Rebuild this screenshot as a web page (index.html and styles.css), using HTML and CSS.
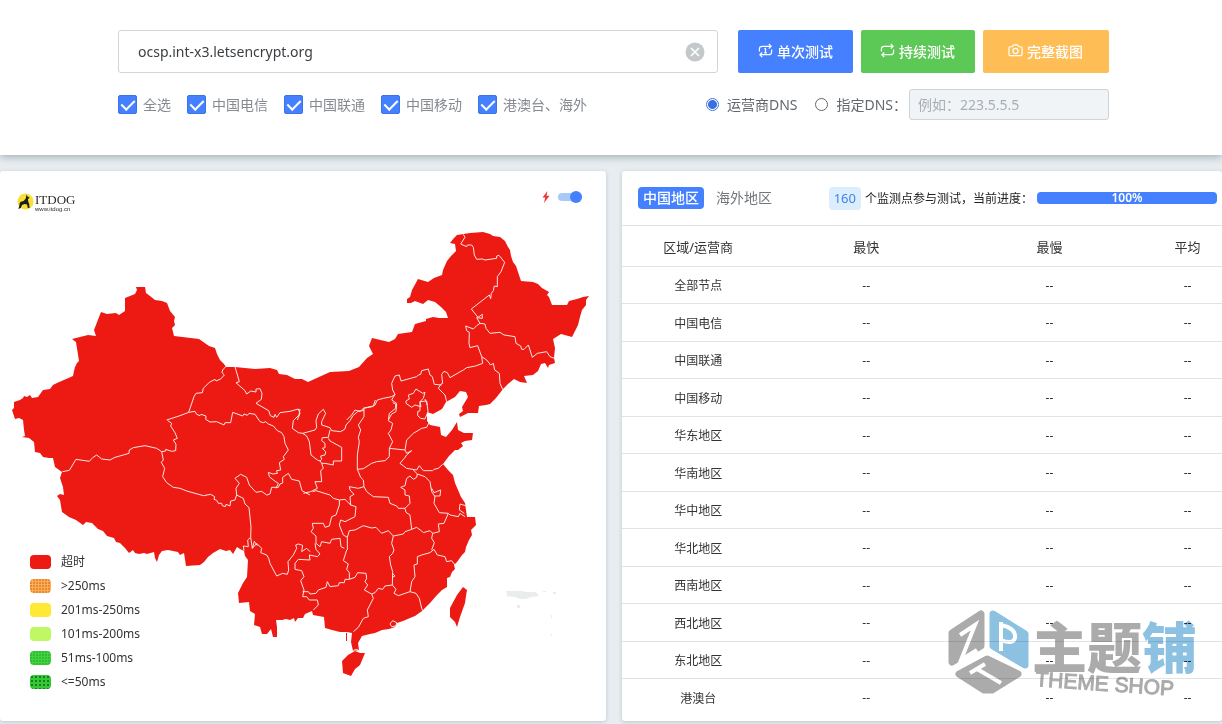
FILE: index.html
```html
<!DOCTYPE html>
<html lang="zh-CN">
<head>
<meta charset="utf-8">
<title>ITDOG</title>
<link rel="stylesheet" href="styles.css">
</head>
<body>
<header class="panel">
  <div class="search-row">
    <div class="search">
      <input class="search-input" type="text" value="ocsp.int-x3.letsencrypt.org" aria-label="域名">
      <button class="clear" type="button" aria-label="清除"><svg viewBox="0 0 20 20" width="20" height="20"><circle cx="10" cy="10" r="9.500" fill="#c3c9ca"/><path d="M6 6l8 8M14 6l-8 8" stroke="#fff" stroke-width="1.6"/></svg></button>
    </div>
    <div class="actions">
      <button class="btn btn-blue" type="button"><svg class="btn-icon" viewBox="0 0 16 16"><path d="M1.500 9V6.500q0-3 3-3H14M11.500 1l2.500 2.500-2.500 2.500M14.500 7v2.500q0 3-3 3H2M4.500 10L2 12.500 4.500 15M6.800 6.500L8 5.800V10.500M6.500 10.500h3"/></svg>单次测试</button>
      <button class="btn btn-green" type="button"><svg class="btn-icon" viewBox="0 0 16 16"><path d="M1.500 9V6.500q0-3 3-3H14M11.500 1l2.500 2.500-2.500 2.500M14.500 7v2.500q0 3-3 3H2M4.500 10L2 12.500 4.500 15"/></svg>持续测试</button>
      <button class="btn btn-orange" type="button"><svg class="btn-icon" viewBox="0 0 16 16"><path d="M2.500 4H4.500l1.500-2h4l1.500 2h2q1.500 0 1.500 1.500v6.500q0 1.500-1.500 1.500h-11Q1 13.500 1 12V5.500Q1 4 2.500 4z"/><circle cx="8" cy="8.500" r="2.700"/></svg>完整截图</button>
    </div>
  </div>
  <div class="options-row">
    <div class="checks">
      <label class="check"><input type="checkbox" checked>全选</label>
      <label class="check"><input type="checkbox" checked>中国电信</label>
      <label class="check"><input type="checkbox" checked>中国联通</label>
      <label class="check"><input type="checkbox" checked>中国移动</label>
      <label class="check"><input type="checkbox" checked>港澳台、海外</label>
    </div>
    <div class="dns">
      <label class="radio"><input type="radio" name="dns" checked>运营商DNS</label>
      <label class="radio"><input type="radio" name="dns">指定DNS：</label>
      <input class="dns-input" type="text" placeholder="例如：223.5.5.5" aria-label="指定DNS">
    </div>
  </div>
</header>

<main class="board">
  <section class="card map-card">
    <div class="map-bar">
      <div class="logo">
        <svg width="18" height="18" viewBox="0 0 18 18"><circle cx="9.500" cy="8.500" r="8" fill="#f8e034"/><path d="M10.500 1.500l.8 1.700 2.200 1.300-.6 1-1 .3.300 2.700 1 2.500.3 4h-1.700l-.7-3.500-2.600-.4-2.500.8-1.200 3.200-2.500 1 1-3 .3-2.500.8-1.700 3.200-.8 2.200-2.500z" fill="#1d1d1b"/></svg>
        <div class="logo-text"><span class="logo-name">ITDOG</span><span class="logo-url">www.itdog.cn</span></div>
      </div>
      <label class="turbo" aria-label="极速模式">
        <svg width="8" height="12" viewBox="0 0 8 12"><path d="M5.500 0L.5 6.500h2.700L2 12l5.500-7.200H4.600z" fill="#e93b3b"/></svg>
        <input type="checkbox" checked>
      </label>
    </div>
    <svg class="map" viewBox="0 221 606 470" role="img" aria-label="中国地图">
      <g fill="#ec1a13">
        <path d="M12 410L14 408 14 402 20 400 23 398 24 396 27 397 30 395 32 398 38 397 43 390 50 389 53 385 57 383 73 376 74 371 75 367 77 363 79 361 76 342 72 339 88 335 96 336 94 330 101 312 107 314 116 313 119 315 125 311 125 298 135 294 137 290 136 287 145 287 146 293 150 296 155 300 162 301 167 303 170 311 175 317 174 321 175 325 172 328 174 336 199 339 209 346 215 348 217 354 220 360 224 364 226 367 235 367 255 369 270 368 277 370 279 374 287 375 295 379 302 379 308 382 330 372 349 371 359 367 367 358 373 354 369 346 372 338 389 342 395 339 398 334 412 332 415 324 426 321 426 319 433 317 439 318 448 318 446 312 441 307 435 302 428 300 423 304 415 301 411 303 407 303 407 299 410 297 412 290 418 279 428 282 434 278 442 275 443 270 447 261 451 256 456 251 455 244 450 243 454 238 457 235 470 233 483 232 490 234 493 236 500 237 505 241 508 247 510 250 511 256 513 262 516 266 518 272 521 281 533 282 538 284 542 288 549 292 547 295 549 297 552 305 567 305 569 301 577 299 583 297 589 296 586 300 586 305 582 310 580 317 578 325 572 337 561 334 553 339 555 348 554 358 555 363 549 365 548 368 545 363 541 364 538 371 533 375 524 376 527 383 520 382 514 379 508 384 503 389 496 398 490 404 486 405 479 406 478 413 468 413 460 417 459 414 463 411 462 407 468 397 466 392 460 391 455 397 446 402 442 409 433 414 427 412 427 421 430 425 440 427 441 435 446 437 452 430 457 422 458 430 464 433 473 433 472 440 465 441 461 443 463 446 458 450 455 450 449 456 443 464 448 470 453 475 455 483 458 490 461 497 465 503 467 517 475 517 476 525 471 530 472 535 469 540 466 547 465 552 462 555 457 562 454 565 455 569 452 572 450 577 447 578 447 587 442 590 437 595 430 603 422 611 415 616 410 618 403 621 397 623 395 627 389 629 382 630 375 633 370 634 362 636 358 643 359 650 353 651 351 642 352 633 347 632 340 632 332 630 325 628 324 617 313 615 312 611 305 614 303 618 298 618 295 622 294 618 290 620 286 619 282 620 276 620 277 627 277 637 273 637 271 629 267 634 262 634 260 627 254 625 255 614 250 611 249 602 239 603 238 593 243 583 247 577 248 560 245 556 244 551 240 549 237 547 233 554 230 550 226 551 220 549 213 553 208 557 204 562 200 565 186 566 184 553 180 555 178 552 173 551 168 550 162 551 159 555 157 562 155 558 154 552 147 554 144 553 139 554 135 553 133 550 129 553 125 548 120 543 116 542 114 538 107 536 103 531 98 529 92 523 86 522 83 525 76 520 69 517 62 512 60 500 57 496 60 494 64 495 63 487 60 478 62 472 55 467 53 458 49 458 43 457 40 453 35 452 34 442 29 438 22 437 25 436 24 430 23 420 19 418 15 419z"/>
        <path d="M346 633h1v8h-1z"/>
        <path d="M342 661L348 655 355 651 360 653 365 653 360 665 355 669 351 676 343 673z"/>
        <path d="M463 587L467 590 466 596 465 603 460 617 457 627 455 622 450 617 450 608 457 595z"/>
      </g>
      <g class="borders">
        <g transform="translate(0 220) scale(.33333)">
          <path d="M677 440L668 450 666 458 673 465 662 477 648 483 645 478 628 487 610 505 607 518 588 520 582 530 566 577 540 587 500 600"/>
          <path d="M705 440L718 485 708 488 735 512 740 522 752 513 768 516 768 507 780 506 786 520 784 538 768 550 806 572 811 587 822 592 825 583 830 592 840 578 870 574 895 567 900 580 892 600"/>
        </g>
        <g transform="translate(0 400) scale(.33333)">
          <path d="M503 62L515 70 512 78 525 98 532 115 520 120 528 133 527 152 515 154 497 148 497 153 485 155 470 145 435 137 400 143 388 150 387 160 370 165 345 172 330 180 305 177 290 165 278 173 268 184 228 178 208 211 187 215"/>
          <path d="M566 37L585 34 590 43 600 47 603 43 618 48 617 58 630 66 650 65 672 75 675 68 692 68 698 37 728 48 732 42 742 46 747 40 765 43 780 65 790 68 797 65 805 72 820 78 832 92 845 98 852 110 855 130 865 150 850 170 853 178 838 188 842 210 830 212 832 220 818 222 805 217 808 230 820 240 835 250 828 265"/>
          <path d="M485 155L490 180 484 187 494 205 488 230 500 248 520 262 540 265 560 273 610 287 632 283 644 290 642 298 650 301 655 310 665 310 667 317 676 320 678 313 690 318 692 303 705 300 710 285 708 265 718 250 705 235 722 223 740 232 748 255 768 277 785 274 800 285 810 282 815 262 835 262 840 252 848 249 848 232 865 220 875 238 898 243 906 272 930 285"/>
          <path d="M710 285L730 295 735 312 747 323 753 380 752 412 757 445 770 430 785 445 782 458 800 465 806 475 810 490 830 528 848 520 862 523 866 510 864 485 880 465 890 445 887 435 895 432 908 436 905 455 920 445 930 455M752 412L743 420 745 440 730 438 732 452M757 445L763 424 772 437"/>
        </g>
        <g transform="translate(300 220) scale(.33333)">
          <path d="M490 43L495 52 482 72 500 80 502 75 515 75 520 82 523 105 530 118 547 117 555 120 590 115 590 108 597 106 614 127 603 155 592 170 592 200 583 198 580 212 574 220 572 236 568 225 514 267 534 292 547 283 547 295 530 293 540 310 555 312 558 325 570 340 600 337 612 345 645 350 648 370 662 378 665 388 672 388 685 375 697 412 712 400 740 395 750 410 763 415"/>
          <path d="M540 310L530 317 520 327 497 318 500 332 508 337 507 370 510 383 533 377 545 410 548 430 527 438 500 443 490 450 450 473 442 458 432 454 425 463 428 490 423 492 415 505 435 525 440 545M545 410L560 420 572 435 580 430 584 450 598 460 600 490 608 508"/>
          <path d="M425 495L403 493 397 470 390 465 385 447 365 452 362 463 355 465 350 470 303 483 298 465 285 468 275 490 278 510 285 523 275 530 250 535 232 540 225 555 217 560 190 565 180 575 165 570 155 585 140 600"/>
          <path d="M285 523L275 540 290 550 288 575 275 582 265 600M348 507L368 520 375 517 370 535 360 545 363 560 345 555 335 562 318 550 318 543 328 537 325 525 340 520zM360 545L380 543 384 575 375 597 362 595 353 587 353 575 360 572zM375 537L382 555"/>
        </g>
        <g transform="translate(230 400) scale(.33333)">
          <path d="M190 62L187 85 205 98 218 100 255 90 260 82 258 62 265 42 280 28 287 40 275 65 275 75 300 83 305 92 332 95 345 87 348 75 360 62 368 48 385 33 400 32 402 24 430 18 436 0M190 62L207 45 210 27"/>
          <path d="M218 100L230 108 238 125 243 165 262 180 270 183 275 178 272 168 285 165 287 155 277 145 285 143 285 130 275 122 277 113 295 112 300 90M295 115L300 123 335 142 335 183 310 183 310 195 285 190 275 190 270 183M275 190L280 205 272 212 275 245 255 245 262 265 242 275 220 280"/>
          <path d="M402 28L402 50 385 75 392 90 385 112 388 125 382 165 382 208 392 232 400 240 402 260 385 265 358 260 360 270 372 283 360 290 362 315"/>
          <path d="M382 208L400 206 425 190 440 185 465 182 478 170 478 145 488 125 475 100 483 90 488 70 475 62 478 40 497 25 497 12 488 8"/>
          <path d="M248 275L258 272 300 285 310 295 328 300 345 298 362 315 378 320 375 350 345 365 332 360 328 375 340 405 352 412 352 450M328 300L328 315 318 345 305 350 298 378 285 382 280 370 270 370 247 370 250 385 243 395 258 408 258 430 270 440 275 425 300 430 305 418 330 415 333 440 343 445"/>
          <path d="M402 260L410 275 430 290 475 292 480 310 500 318 505 325 525 325 528 337 540 345 545 388 525 395 520 402 490 408 475 392 455 400 438 382 425 384 400 377 375 390 358 392 352 412M545 388L560 382 575 393 580 398 600 392 608 400 605 415 613 428 605 450M490 408L485 430 492 450"/>
          <path d="M525 325L540 310 538 288 525 285 525 270 512 262 525 257 530 235 540 228 550 238 560 232 562 222 585 230 600 245 605 275 615 290 612 310 628 338 655 340 642 370 625 372 628 395 608 400M605 265L612 278 632 270 630 288 612 288"/>
          <path d="M562 222L548 208 530 205 510 190 523 175 530 165 545 152 530 160 525 150 478 145M525 150L530 120 550 100 575 85 590 82 597 68M548 208L560 210 568 197 580 212 608 212 612 208 625 205 638 193M655 340L660 345 685 350 690 340 705 350M710 318L690 312 688 330 703 340"/>
        </g>
        <g transform="translate(230 540) scale(.33333)">
          <path d="M350 30L340 62 355 72 350 88 358 98 358 118 375 112 383 98 408 100 410 115 405 125 413 135 403 150 425 162M358 118L345 118 343 128 328 128 325 137 300 140 292 125 288 142 265 150 258 160 240 162 235 155 218 155"/>
          <path d="M255 10L258 28 270 42 262 50 238 45 240 60 205 58 195 70 195 88 215 92 222 110 212 122 222 150 218 170 230 170 238 180 262 180 265 195 250 210"/>
          <path d="M492 30L488 40 478 50 482 75 488 95 487 135 465 138 458 148 445 145 435 158 425 162 430 175 412 210 415 230 400 235 385 262 370 275M487 100L495 108 487 112M487 135L498 148 492 160 505 167 540 155 558 160 568 175 575 205 578 212"/>
          <path d="M540 155L545 125 555 110 552 75 562 72 562 50 575 45 600 38 612 28 622 45 645 50 650 65 665 62 675 75M483 248L488 242 500 248 498 258 485 260 480 252zM370 331L380 328 390 333"/>
        </g>
      </g>
      <g fill="#e9edeb"><path d="M506 591h17l3 1h10l3 4-8 1-5 2-6 0-5-2-8-1z"/><path d="M543 591h3v1h-3zM553 592h3v2h-3zM517 605h3v3h-3zM551 615h1v3h-1zM551 634h1v2h-1z"/></g>
    </svg>
    <ul class="legend">
      <li><i class="swatch s-timeout"></i>超时</li>
      <li><i class="swatch s-250"></i>&gt;250ms</li>
      <li><i class="swatch s-201"></i>201ms-250ms</li>
      <li><i class="swatch s-101"></i>101ms-200ms</li>
      <li><i class="swatch s-51"></i>51ms-100ms</li>
      <li><i class="swatch s-50"></i>&lt;=50ms</li>
    </ul>
  </section>

  <section class="card result-card">
    <div class="result-bar">
      <div class="tabs">
        <button class="tab tab-active" type="button">中国地区</button>
        <button class="tab" type="button">海外地区</button>
      </div>
      <div class="status">
        <span class="count">160</span>
        <span class="status-text">个监测点参与测试，当前进度：</span>
        <div class="progress">100%</div>
      </div>
    </div>
    <table class="results">
      <colgroup><col class="c-area"><col class="c-fast"><col class="c-slow"><col></colgroup>
      <thead><tr><th>区域/运营商</th><th>最快</th><th>最慢</th><th>平均</th></tr></thead>
      <tbody>
        <tr><td>全部节点</td><td>--</td><td>--</td><td>--</td></tr>
        <tr><td>中国电信</td><td>--</td><td>--</td><td>--</td></tr>
        <tr><td>中国联通</td><td>--</td><td>--</td><td>--</td></tr>
        <tr><td>中国移动</td><td>--</td><td>--</td><td>--</td></tr>
        <tr><td>华东地区</td><td>--</td><td>--</td><td>--</td></tr>
        <tr><td>华南地区</td><td>--</td><td>--</td><td>--</td></tr>
        <tr><td>华中地区</td><td>--</td><td>--</td><td>--</td></tr>
        <tr><td>华北地区</td><td>--</td><td>--</td><td>--</td></tr>
        <tr><td>西南地区</td><td>--</td><td>--</td><td>--</td></tr>
        <tr><td>西北地区</td><td>--</td><td>--</td><td>--</td></tr>
        <tr><td>东北地区</td><td>--</td><td>--</td><td>--</td></tr>
        <tr><td>港澳台</td><td>--</td><td>--</td><td>--</td></tr>
      </tbody>
    </table>
    <svg class="watermark" width="260" height="100" viewBox="0 0 260 100" aria-hidden="true">
      <g stroke-linejoin="round" stroke-width="7">
        <path d="M8 31L37 12V44L8 60z" fill="#ababab" stroke="#ababab"/>
        <path d="M49 12L81 32V63L49 44z" fill="#8cc1e1" stroke="#8cc1e1"/>
        <path d="M15 72L43 57 74 72 48 88 40 88z" fill="#ababab" stroke="#ababab"/>
      </g>
      <g fill="none" stroke="#fff" stroke-width="4">
        <path d="M16 33L31 23 17 58 33 48"/>
        <path d="M57 20V49M57 23Q72 26 71 36 69 43 57 38"/>
        <path d="M26 71L41 62M33 67L57 81"/>
      </g>
      <text class="wm-cn" x="88" y="66"><tspan fill="#ababab">主题</tspan><tspan fill="#8cc1e1">铺</tspan></text>
      <text class="wm-en" x="91" y="84" transform="rotate(4 91 84)">THEME SHOP</text>
    </svg>
  </section>
</main>
</body>
</html>
```
FILE: styles.css
```css
* { box-sizing: border-box; }
body {
  margin: 0;
  background: #e8edf1;
  color: #333;
  font-family: "Noto Sans", "Noto Sans CJK SC", sans-serif;
  font-size: 14px;
}
button, input { font: inherit; }
button { border: 0; padding: 0; cursor: pointer; }

.panel {
  padding: 30px 113px 35px 118px;
  background: #fff;
  box-shadow: 0 2px 8px rgba(60, 80, 95, .4);
}
.search-row { display: flex; gap: 20px; }
.search { position: relative; flex: 1; }
.search-input {
  width: 100%;
  height: 43px;
  padding: 0 44px 0 19px;
  border: 1px solid #d2d4d7;
  border-radius: 3px;
  background: #fff;
  color: #3c4043;
}
.clear {
  position: absolute;
  top: 12px;
  right: 13px;
  height: 20px;
  background: none;
}
.clear svg { display: block; }
.actions { display: flex; gap: 8px; }
.btn {
  display: flex;
  align-items: center;
  justify-content: center;
  gap: 4px;
  height: 43px;
  padding: 0 20px 2px;
  border-radius: 2px;
  color: #fff;
  font-weight: 500;
}
.btn-icon { width: 15px; height: 15px; fill: none; stroke: #fff; stroke-width: 1.3; }
.btn-blue { background: #4580ff; }
.btn-green { padding-left: 19px; background: #5cc855; }
.btn-orange { padding: 0 26px 2px 25px; background: #ffbe55; }

.options-row { display: flex; justify-content: space-between; margin-top: 16px; }
.checks, .dns { display: flex; align-items: center; }
.checks { gap: 16px; color: #868b92; }
.check, .radio { display: flex; align-items: center; line-height: 20px; }
.check { gap: 6px; }
.check input {
  appearance: none;
  width: 19px;
  height: 19px;
  margin: 0;
  border: 1px solid #3a72e8;
  border-radius: 2px;
  background: #4580ff;
}
.check input::before {
  content: "";
  display: block;
  width: 6px;
  height: 11px;
  margin: 1px 0 0 5px;
  border: solid #fff;
  border-width: 0 2px 2px 0;
  transform: rotate(45deg);
}
.radio { gap: 8px; color: #63686e; }
.radio + .radio { margin-left: 18px; }
.radio input {
  appearance: none;
  width: 13px;
  height: 13px;
  margin: 0;
  border: 1px solid #666;
  border-radius: 50%;
  background: #fff;
}
.radio input:checked {
  border-color: #3b78e0;
  background: radial-gradient(circle, #3b6fe0 4px, #fff 5px);
}
.dns-input {
  width: 200px;
  height: 31px;
  margin-left: 2px;
  padding: 0 8px;
  border: 1px solid #cdd3d8;
  border-radius: 3px;
  background: #f0f4f7;
}
.dns-input::placeholder { color: #a9aeb3; opacity: 1; }

.board {
  display: grid;
  grid-template-columns: 606fr 600fr;
  gap: 16px;
  margin-top: 16px;
  padding-bottom: 3px;
}
.card {
  position: relative;
  min-width: 0;
  border-radius: 3px;
  background: #fff;
  box-shadow: 0 1px 4px rgba(90, 105, 120, .3);
}
.map-card { padding-bottom: 30px; }
.map-bar {
  display: flex;
  justify-content: space-between;
  height: 50px;
  padding: 20px 24px 0 16px;
}
.logo { display: flex; align-items: flex-start; gap: 1px; }
.logo svg { margin-top: 2px; }
.logo-text { display: flex; flex-direction: column; color: #2b2b2b; }
.logo-name { font: 13px/14px "Liberation Serif", serif; margin-top: 2px; }
.logo-url { font: 6px/5px "Liberation Sans", sans-serif; }
.turbo { display: flex; align-items: center; gap: 8px; height: 12px; }
.turbo input {
  appearance: none;
  display: flex;
  align-items: center;
  justify-content: flex-end;
  width: 24px;
  height: 8px;
  margin: 0;
  border-radius: 4px;
  background: #a9caf8;
}
.turbo input::before {
  content: "";
  width: 12px;
  height: 12px;
  border-radius: 50%;
  background: #4580ff;
}
.map { display: block; width: 100%; height: auto; }
.borders path { fill: none; stroke: #ffe6e3; stroke-width: 3; stroke-linejoin: round; }
.legend {
  position: absolute;
  left: 30px;
  bottom: 27px;
  margin: 0;
  padding: 0;
  list-style: none;
  font-size: 12px;
  line-height: 24px;
}
.legend li { display: flex; align-items: center; gap: 10px; }
.swatch { width: 21px; height: 14px; border-radius: 4px; }
.s-timeout { background: #ec1a13; }
.s-250 { background: radial-gradient(circle at 1px 1px, #e8853a 1px, transparent 1px) 0 0 / 3px 3px #ffb04e; }
.s-201 { background: #ffe935; }
.s-101 { background: #bff862; }
.s-51 { background: radial-gradient(circle at 1px 1px, #32bb36 1px, transparent 1px) 0 0 / 3px 3px #3fd33c; }
.s-50 { background: radial-gradient(circle at 2px 2px, #1b7a22 1px, transparent 1px) 0 0 / 4px 4px #35c935; }

.result-card { padding-bottom: 4px; }
.result-bar {
  display: flex;
  align-items: center;
  justify-content: space-between;
  height: 54px;
  padding: 0 5px 0 16px;
}
.tabs { display: flex; gap: 7px; }
.tab {
  height: 22px;
  padding: 0 5px;
  border-radius: 4px;
  background: none;
  color: #73777c;
  line-height: 22px;
}
.tab-active { background: #4580ff; color: #fff; font-weight: 500; }
.status { display: flex; align-items: center; gap: 4px; font-size: 12px; color: #222; }
.count {
  padding: 0 5px;
  border-radius: 4px;
  background: #dcedfd;
  color: #3f84e8;
  font-size: 13px;
  line-height: 23px;
}
.progress {
  width: 180px;
  border-radius: 4px;
  background: #4580ff;
  color: #fff;
  font-weight: 600;
  line-height: 12px;
  text-align: center;
}
.results { width: 100%; border-collapse: collapse; table-layout: fixed; font-size: 12px; }
.c-area { width: 25.4%; }
.c-fast { width: 30.6%; }
.c-slow { width: 30.5%; }
.results th, .results td {
  height: 37px;
  padding: 0;
  border-top: 1px solid #e0e4e6;
  font-weight: 400;
  text-align: center;
}
.results th { height: 41px; font-size: 13px; }
.results tr:nth-child(even) td { height: 38px; }
.results th:last-child, .results td:last-child { padding-left: 12px; }
.watermark {
  position: absolute;
  right: 18px;
  bottom: 19px;
  mix-blend-mode: multiply;
  pointer-events: none;
}
.wm-cn { font: 900 55px "Noto Sans CJK SC", sans-serif; }
.wm-en { font: 21px "Liberation Sans", sans-serif; fill: #ababab; stroke: #ababab; }
```
